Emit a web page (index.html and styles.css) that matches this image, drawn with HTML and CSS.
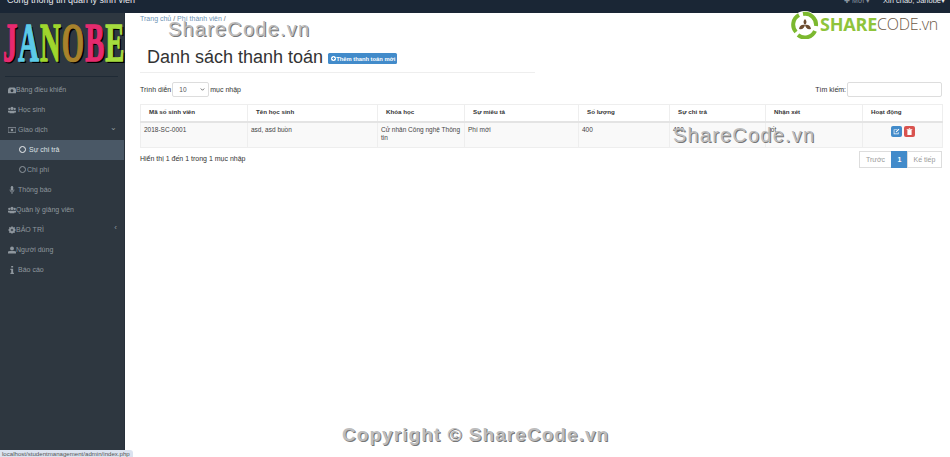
FILE: index.html
```html
<!DOCTYPE html>
<html lang="vi">
<head>
<meta charset="utf-8">
<title>Danh sách thanh toán</title>
<link rel="stylesheet" href="styles.css">
</head>
<body>
<header class="topbar">
  <div class="brand">Cổng thông tin quản lý sinh viên</div>
  <div class="top-right">
    <span class="top-new">✚ Mới ▾</span>
    <span class="top-user">Xin chào, Janobe▾</span>
  </div>
</header>
<div class="shell">
  <aside class="sidebar">
    <div class="logo"><div class="logo-text"><span class="l1">J</span><span class="l2">A</span><span class="l3">N</span><span class="l4">O</span><span class="l5">B</span><span class="l6">E</span></div></div>
    <hr class="side-rule">
    <nav class="menu">
      <a class="item"><svg class="ico" viewBox="0 0 10 10"><path d="M0 9V5q0-2 2-3h6q2 1 2 3v4z"/><circle cx="5" cy="6" r="1.8" fill="#2e3740"/></svg>Bảng điều khiển</a>
      <a class="item"><svg class="ico ico-wide" viewBox="0 0 10 10"><circle cx="5" cy="3" r="2"/><circle cx="1.6" cy="3.6" r="1.4"/><circle cx="8.4" cy="3.6" r="1.4"/><path d="M0 8V6h10v2H8v1H2V8z"/></svg>Học sinh</a>
      <a class="item"><svg class="ico ico-wide" viewBox="0 0 10 10"><path d="M0 2h10v6H0z" fill="none" stroke="#8f979e"/><circle cx="5" cy="5" r="1.6"/></svg>Giao dịch<span class="chev">⌄</span></a>
      <a class="item sub active"><span class="ring"></span>Sự chi trả</a>
      <a class="item sub sub-tight"><span class="ring"></span>Chi phí</a>
      <a class="item"><svg class="ico ico-wide" viewBox="0 0 10 10"><rect x="3.5" y="0" width="3" height="6" rx="1.5"/><path d="M2.500 4.500q0 3 2.500 3t2.500-3M5 7.500V10" fill="none" stroke="#8f979e"/></svg>Thông báo</a>
      <a class="item"><svg class="ico" viewBox="0 0 10 10"><circle cx="5" cy="3" r="2"/><circle cx="1.600" cy="3.600" r="1.400"/><circle cx="8.400" cy="3.600" r="1.400"/><path d="M0 8V6h10v2H8v1H2V8z"/></svg>Quản lý giảng viên</a>
      <a class="item"><svg class="ico" viewBox="0 0 10 10"><circle cx="5" cy="5" r="2.800" fill="none" stroke="#8f979e" stroke-width="2.200"/><path d="M5 0v10M0 5h10M1.500 1.500l7 7M8.500 1.500l-7 7" stroke="#8f979e"/><circle cx="5" cy="5" r="1.200" fill="#2e3740"/></svg>BẢO TRÌ<span class="chev">‹</span></a>
      <a class="item"><svg class="ico" viewBox="0 0 10 10"><circle cx="5" cy="3" r="2.400"/><path d="M0 9.500V7q2-1 5-1t5 1v2.500z"/></svg>Người dùng</a>
      <a class="item"><svg class="ico ico-info" viewBox="0 0 10 10"><path d="M4 0h2.400v2H4zM3 3.500h3.400v5h1V10H3V8.500h1V5H3z"/></svg>Báo cáo</a>
    </nav>
  </aside>
  <main class="content">
    <div class="crumbs"><a>Trang chủ</a> / <a>Phí thành viên</a> /</div>
    <div class="page-head">
      <h1>Danh sách thanh toán</h1>
      <a class="add-btn"><svg class="add-ico" viewBox="0 0 10 10"><circle cx="5" cy="5" r="5" fill="#fff"/><path d="M5 2v6M2 5h6" stroke="#428bca" stroke-width="1.600"/></svg>Thêm thanh toán mới</a>
    </div>
    <div class="controls">
      <label class="len"><span>Trình diễn</span><select class="len-select"><option>10</option></select><span>mục nhập</span></label>
      <label class="search">Tìm kiếm: <input class="search-input" type="text"></label>
    </div>
    <table class="grid">
      <thead>
        <tr>
          <th class="c1">Mã số sinh viên</th>
          <th class="c2">Tên học sinh</th>
          <th class="c3">Khóa học</th>
          <th class="c4">Sự miêu tả</th>
          <th class="c5">Số lượng</th>
          <th class="c6">Sự chi trả</th>
          <th class="c7">Nhận xét</th>
          <th class="c8">Hoạt động</th>
        </tr>
      </thead>
      <tbody>
        <tr>
          <td>2018-SC-0001</td>
          <td>asd, asd buồn</td>
          <td>Cử nhân Công nghệ Thông tin</td>
          <td>Phí mới</td>
          <td>400</td>
          <td>400</td>
          <td>tốt</td>
          <td class="actions">
            <a class="act act-edit"><svg viewBox="0 0 10 10"><path d="M1 2h5v1H2v5h5V6h1v3H1z" fill="#fff"/><path d="M4 5l4-4 1 1-4 4H4z" fill="#fff"/></svg></a>
            <a class="act act-del"><svg viewBox="0 0 10 10"><path d="M2 3h6v7H2zM1 1.500h8v1H1zM4 .5h2v1H4z" fill="#fff"/></svg></a>
          </td>
        </tr>
      </tbody>
    </table>
    <div class="table-foot">
      <div class="info">Hiển thị 1 đến 1 trong 1 mục nhập</div>
      <div class="pager"><a class="pg pg-off pg-prev">Trước</a><a class="pg pg-on">1</a><a class="pg pg-off pg-next">Kế tiếp</a></div>
    </div>
  </main>
</div>
<div class="mark mark-top">ShareCode.vn</div>
<div class="mark mark-mid">ShareCode.vn</div>
<div class="mark mark-bottom">Copyright © ShareCode.vn</div>
<div class="sc-logo">
  <svg class="sc-ring" viewBox="0 0 28 28"><circle cx="14" cy="14" r="14" fill="#fff"/><path d="M8 4a11 11 0 0 0-3 17" fill="none" stroke="#7cb82f" stroke-width="4"/><path d="M7 24a11 11 0 0 0 17-4" fill="none" stroke="#7cb82f" stroke-width="4"/><path d="M12 3a11 11 0 0 1 13 12" fill="none" stroke="#7cb82f" stroke-width="4"/><path d="M14 8q3 3 0 6q-3-3 0-6zM14 14q5-1 6 4q-5 1-6-4zM14 14q-5-1-6 4q5 1 6-4z" fill="#6d4c2f"/></svg>
  <span class="sc-share">SHARE</span><span class="sc-code">CODE.vn</span>
</div>
<div class="status">localhost/studentmanagement/admin/index.php</div>
</body>
</html>
```
FILE: styles.css
```css
* { box-sizing: border-box; }
html, body { margin: 0; height: 100%; overflow: hidden; }
body {
  width: 950px;
  height: 457px;
  display: flex;
  flex-direction: column;
  position: relative;
  background: #fff;
  color: #333;
  font-family: "Liberation Sans", Arial, sans-serif;
  font-size: 7px;
}
a { color: inherit; text-decoration: none; }

.topbar {
  height: 13px;
  flex: none;
  background: #1a2635;
  color: #e6e9ec;
  display: flex;
  justify-content: space-between;
  align-items: flex-end;
  overflow: hidden;
  padding: 0 5px 7px 7px;
  line-height: 11px;
}
.brand { font-size: 9px; }
.top-right { display: flex; gap: 13px; font-size: 7.500px; }
.top-new { color: #8b95a0; font-size: 7px; }

.shell { flex: 1; display: flex; min-height: 0; }

.sidebar {
  width: 125px;
  flex: none;
  background: #2e3740;
  border-right: 1px solid #27303a;
  color: #8f979e;
}
.logo { height: 59px; padding-top: 7px; overflow: visible; }
.logo-text {
  width: 220px;
  font-family: "Liberation Serif", serif;
  font-weight: bold;
  font-size: 54px;
  line-height: 46px;
  letter-spacing: 2px;
  white-space: nowrap;
  transform-origin: 0 0;
  transform: translateX(3px) scaleX(.53);
  text-shadow: 3px 2px 0 #000;
  -webkit-text-stroke: 1.5px currentColor;
}
.l1 { color: #e8296f; }
.l2 { color: #5ccbe9; }
.l3 { color: #9fd62d; }
.l4 { color: #a8822c; }
.l5 { color: #e52a6e; }
.l6 { color: #a5dc3e; }
.side-rule {
  margin: 4px 6px 3px 5px;
  border: 0;
  border-top: 1px solid #1f2a35;
}
.menu { display: flex; flex-direction: column; }
.item {
  height: 20px;
  display: flex;
  align-items: center;
  padding: 0 0 1px 8px;
  font-size: 7px;
  position: relative;
}
.ico { width: 8px; height: 8px; fill: #8f979e; flex: none; margin-right: 0; }
.ico-wide { margin-right: 2px; }
.ico-info { margin-right: 2px; }
.chev { position: absolute; right: 7px; top: 3px; font-size: 8px; }
.sub { padding-left: 19px; }
.ring {
  width: 7px;
  height: 7px;
  border: 1.500px solid #c8ced3;
  border-radius: 50%;
  margin-right: 3px;
  flex: none;
}
.sub-tight .ring { border-color: #8f979e; border-width: 1px; margin-right: 1px; }
.active { background: #4a5866; color: #dfe3e6; }
.active .ring { border-color: #eef0f2; }

.content { flex: 1; min-width: 0; padding: 1px 8px 0 15px; }
.crumbs { font-size: 7px; line-height: 9px; color: #666; }
.crumbs a { color: #6e93b5; }
.page-head {
  width: 395px;
  height: 50px;
  padding: 0 0 4px 7px;
  display: flex;
  align-items: flex-end;
  gap: 5px;
  border-bottom: 1px solid #eee;
}
.page-head h1 {
  margin: 0;
  font-weight: normal;
  font-size: 18px;
  line-height: 22px;
  color: #333;
}
.add-btn {
  display: flex;
  align-items: center;
  height: 11px;
  margin-bottom: 4px;
  padding: 0 2px 0 3px;
  background: #428bca;
  border-radius: 1.500px;
  color: #fff;
  font-size: 5.800px;
  font-weight: bold;
}
.add-ico { width: 5px; height: 5px; flex: none; }

.controls {
  display: flex;
  justify-content: space-between;
  align-items: center;
  height: 15px;
  margin: 9px 0 7px;
  font-size: 7px;
}
.len { display: flex; align-items: center; gap: 1px; }
.len-select {
  appearance: none;
  width: 37px;
  height: 15px;
  padding: 0 0 0 6px;
  font-size: 6.500px;
  font-family: inherit;
  border: 1px solid #ddd;
  border-radius: 2px;
  background: #fff url("data:image/svg+xml,%3Csvg xmlns='http://www.w3.org/2000/svg' viewBox='0 0 6 4'%3E%3Cpath d='M.7.7 3 3 5.300.7' fill='none' stroke='%23444' stroke-width='1'/%3E%3C/svg%3E") no-repeat right 3px center / 5px 3px;
  color: #555;
  margin: 0;
}
.search-input {
  width: 95px;
  height: 15px;
  border: 1px solid #ddd;
  border-radius: 2px;
  margin: 0 0 0 -1px;
  padding: 0;
}
.search { display: flex; align-items: center; white-space: pre; }

.grid {
  width: 802px;
  table-layout: fixed;
  border-collapse: collapse;
  font-size: 6.500px;
}
.grid th, .grid td { border: 1px solid #eee; vertical-align: top; }
.grid th {
  height: 17px;
  padding: 3px 0 0 8px;
  text-align: left;
  font-size: 6.200px;
  font-weight: bold;
  color: #333;
  border-bottom: 2px solid #e4e4e4;
  line-height: 8px;
}
.grid td {
  height: 26px;
  padding: 3px 1px 0 3px;
  line-height: 8.500px;
  color: #444;
  background: #f9f9f9;
}
.c1 { width: 107px; }
.c2 { width: 130px; }
.c3 { width: 87px; }
.c4 { width: 114px; }
.c5 { width: 91px; }
.c6 { width: 96px; }
.c7 { width: 97px; }
.c8 { width: 80px; }
.grid td.actions { padding: 3px 0 0; text-align: center; font-size: 0; line-height: 0; }
.act {
  display: inline-block;
  width: 11px;
  height: 11px;
  margin: 0 1px;
  padding: 2px;
  border-radius: 2px;
}
.act svg { display: block; width: 7px; height: 7px; }
.act-edit { background: #428bca; }
.act-del { background: #d9534f; }

.table-foot {
  display: flex;
  justify-content: space-between;
  align-items: flex-start;
  margin-top: 3px;
  font-size: 7px;
}
.info { padding-top: 4px; }
.pager { display: flex; height: 17px; }
.pg {
  display: flex;
  align-items: center;
  justify-content: center;
  border: 1px solid #ddd;
  margin-left: -1px;
  font-size: 7px;
}
.pg-prev { width: 33px; }
.pg-next { width: 35px; }
.pg-off { color: #9a9a9a; background: #fff; }
.pg-on { width: 17px; background: #428bca; border-color: #428bca; color: #fff; font-weight: bold; }

.mark {
  position: absolute;
  font-family: "Liberation Sans", Arial, sans-serif;
  white-space: nowrap;
  color: #bdbdbd;
  text-shadow: 1px 1px 0 #777;
  pointer-events: none;
}
.mark-top { left: 168px; top: 18px; font-size: 20px; letter-spacing: 1.200px; }
.mark-mid { left: 673px; top: 124px; font-size: 20px; letter-spacing: 1.200px; }
.mark-bottom { left: 342px; top: 424px; font-size: 19px; font-weight: bold; letter-spacing: 1.050px; }

.sc-logo {
  position: absolute;
  left: 791px;
  top: 10px;
  display: flex;
  align-items: center;
  height: 29px;
  font-family: "Open Sans", sans-serif;
  line-height: 29px;
}
.sc-ring { width: 28px; height: 28px; flex: none; margin-right: 1px; }
.sc-share { color: #8fc43b; font-size: 18px; font-weight: 700; letter-spacing: -.2px; }
.sc-code { color: #6d5a48; font-size: 16px; font-weight: 300; letter-spacing: -.3px; }

.status {
  position: absolute;
  left: 0;
  bottom: 0;
  width: 133px;
  height: 7px;
  padding-left: 2px;
  background: #dbe3f0;
  border-top-right-radius: 3px;
  color: #555;
  font-size: 6.100px;
  line-height: 7px;
  white-space: nowrap;
  overflow: hidden;
}
```
